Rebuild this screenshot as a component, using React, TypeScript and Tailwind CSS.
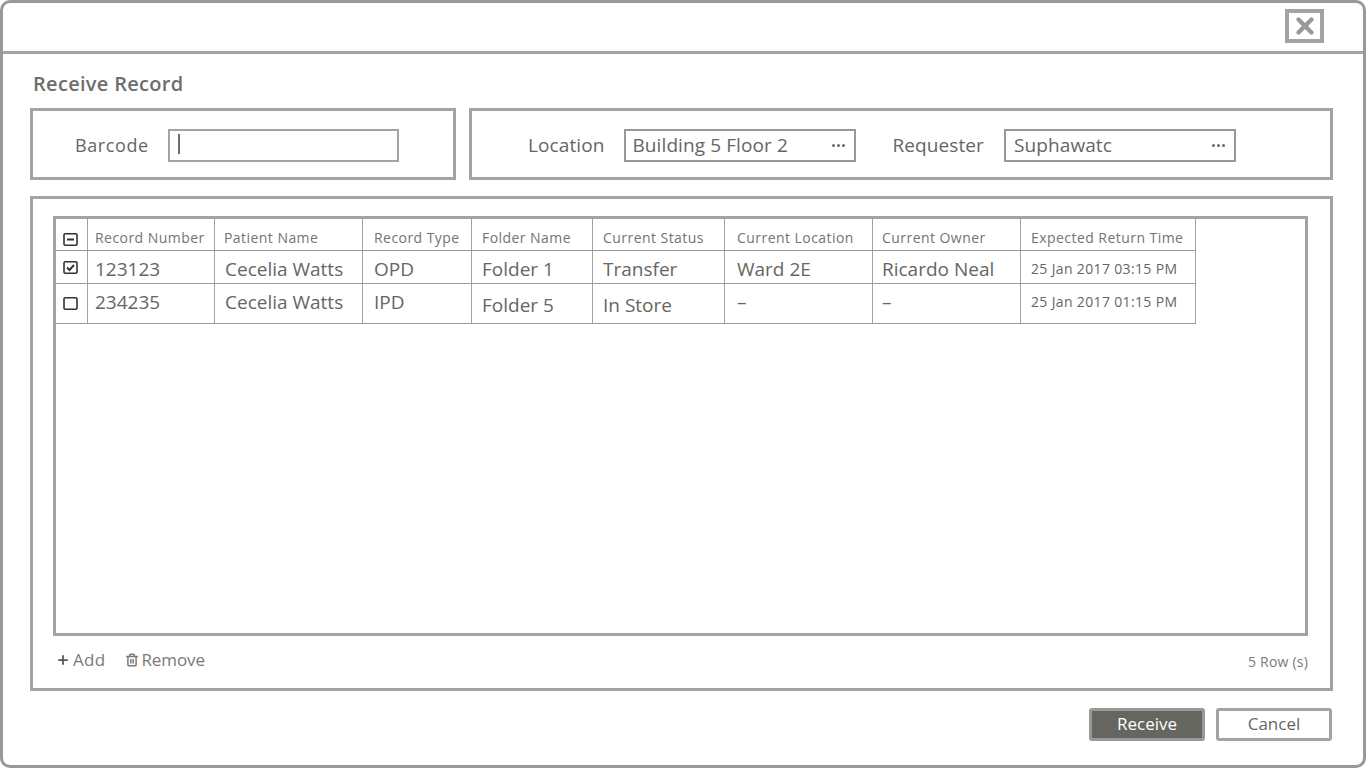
import { Plus, Trash2, X } from "lucide-react";

const columns = [
  { label: "Record Number", width: "w-[127px]", pad: "pl-[7px]", headPad: "pl-[7px]" },
  { label: "Patient Name", width: "w-[148px]", pad: "pl-[10px]", headPad: "pl-[9px]" },
  { label: "Record Type", width: "w-[109px]", pad: "pl-[11px]", headPad: "pl-[11px]" },
  { label: "Folder Name", width: "w-[121px]", pad: "pl-[10px]", headPad: "pl-[10px]" },
  { label: "Current Status", width: "w-[132px]", pad: "pl-[10px]", headPad: "pl-[10px]" },
  { label: "Current Location", width: "w-[148px]", pad: "pl-[12px]", headPad: "pl-[12px]" },
  { label: "Current Owner", width: "w-[148px]", pad: "pl-[9px]", headPad: "pl-[9px]" },
  { label: "Expected Return Time", width: "w-[175px]", pad: "pl-[10px]", headPad: "pl-[10px]" },
];

const rows = [
  { checked: true, height: "h-[33px]", cells: ["123123", "Cecelia Watts", "OPD", "Folder 1", "Transfer", "Ward 2E", "Ricardo Neal", "25 Jan 2017 03:15 PM"] },
  { checked: false, height: "h-[40px]", cells: ["234235", "Cecelia Watts", "IPD", "Folder 5", "In Store", "–", "–", "25 Jan 2017 01:15 PM"] },
];

function CheckBox({ mark }: { mark?: "minus" | "check" }) {
  return (
    <svg width="15" height="13" viewBox="0 0 15 13" fill="none" stroke="#333" strokeWidth="1.6">
      <rect x="1" y="0.8" width="13" height="11.4" rx="1.2" />
      {mark === "minus" && <path d="M4 6.5h7" strokeWidth="2" />}
      {mark === "check" && <path d="M4 6.5l2.5 2.5L11 4" strokeWidth="2" />}
    </svg>
  );
}

function Dots() {
  return (
    <span className="flex gap-[2px]">
      <span className="w-[3px] h-[3px] rounded-full bg-[#6b6b6b]" />
      <span className="w-[3px] h-[3px] rounded-full bg-[#6b6b6b]" />
      <span className="w-[3px] h-[3px] rounded-full bg-[#6b6b6b]" />
    </span>
  );
}

function PickField({ value, pad }: { value: string; pad: string }) {
  return (
    <div className={`w-[232px] h-[33px] border-2 border-[#999] flex items-center justify-between ${pad} pr-[9px] text-[19px] font-medium tracking-[0.1px]`}>
      <span>{value}</span>
      <Dots />
    </div>
  );
}

export default function App() {
  return (
    <div className="w-[1366px] h-[768px] bg-white text-[#666663] overflow-hidden" style={{ fontFamily: '"Open Sans", sans-serif' }}>
      <div className="h-full border-[3px] border-[#999] rounded-[10px] flex flex-col">
        <div className="h-[51px] shrink-0 border-b-[3px] border-[#a3a3a3] flex justify-end pt-[6px] pr-[39px]">
          <div className="w-[39px] h-[34px] border-[4px] border-[#a3a3a3] flex items-center justify-center">
            <X size={26} strokeWidth={4} className="text-[#999]" />
          </div>
        </div>

        <div className="flex-1 flex flex-col pl-[27px] pr-[30px]">
          <h1 className="pt-[15px] pl-[3px] h-[54px] text-[20px] leading-[30px] font-semibold tracking-[0.3px] text-[#6e6e6b]">Receive Record</h1>

          <div className="flex gap-[13px] h-[72px]">
            <div className="w-[426px] border-[3px] border-[#a3a3a3] flex items-center pl-[42px] pt-[3px] gap-[19px]">
              <span className="text-[18px] font-medium tracking-[0.6px]">Barcode</span>
              <div className="w-[231px] h-[33px] border-2 border-[#a3a3a3] flex items-center pl-[8px]">
                <span className="w-[2px] h-[20px] bg-[#6b6b68] -mt-[3px]" />
              </div>
            </div>
            <div className="flex-1 border-[3px] border-[#a3a3a3] flex items-center pl-[56px] pt-[3px]">
              <span className="text-[19px] font-medium mr-[20px] tracking-[0.1px]">Location</span>
              <PickField value="Building 5 Floor 2" pad="pl-[6px]" />
              <span className="text-[19px] font-medium ml-[36px] mr-[20px] tracking-[0.1px]">Requester</span>
              <PickField value="Suphawatc" pad="pl-[8px]" />
            </div>
          </div>

          <div className="mt-[16px] h-[495px] border-[3px] border-[#a3a3a3] pt-[17px] pl-[20px] pr-[22px] flex flex-col">
            <div className="h-[420px] border-[3px] border-[#a3a3a3]">
              <div className="flex w-[1140px] h-[32px] border-b border-[#999]">
                <div className="w-[32px] border-r border-[#a3a3a3] flex items-center justify-center pt-[9px] pr-[3px]">
                  <CheckBox mark="minus" />
                </div>
                {columns.map((col) => (
                  <div key={col.label} className={`${col.width} ${col.headPad} border-r border-[#a3a3a3] pt-[10px] text-[14px] leading-[18px] font-medium tracking-[0.45px] text-[#737373]`}>
                    {col.label}
                  </div>
                ))}
              </div>
              {rows.map((row) => (
                <div key={row.cells[0]} className={`flex w-[1140px] ${row.height} border-b border-[#999]`}>
                  <div className={`w-[32px] border-r border-[#a3a3a3] flex justify-center pr-[3px] ${row.checked ? "pt-[10px]" : "pt-[13px]"}`}>
                    <CheckBox mark={row.checked ? "check" : undefined} />
                  </div>
                  {row.cells.map((cell, i) => (
                    <div
                      key={i}
                      className={`${columns[i].width} ${columns[i].pad} border-r border-[#a3a3a3] ${i === 7 ? "text-[14px] leading-[26px] font-medium tracking-[0.35px]" : "text-[19px] leading-[26px] font-medium"} ${!row.checked && (i === 3 || i === 4) ? "pt-[8px]" : "pt-[5px]"}`}
                    >
                      {cell}
                    </div>
                  ))}
                </div>
              ))}
            </div>
            <div className="flex items-center justify-between flex-1 pb-[5px] text-[#7a7a7a]">
              <div className="flex items-center pl-[3px]">
                <Plus size={14} strokeWidth={3} className="text-[#555] mr-[3px]" />
                <span className="text-[17px] tracking-[0.3px] mr-[20px]">Add</span>
                <Trash2 size={14} strokeWidth={2.6} className="mr-[2px]" />
                <span className="text-[17px] tracking-[-0.1px]">Remove</span>
              </div>
              <span className="text-[14px] tracking-[0.2px] pt-[4px]">5 Row (s)</span>
            </div>
          </div>

          <div className="flex justify-end gap-[11px] mt-[17px] mr-[1px]">
            <button className="w-[116px] h-[33px] rounded-[3px] border-[3px] border-[#999] bg-[#666660] text-white text-[17px] font-medium pb-[2px]">Receive</button>
            <button className="w-[116px] h-[33px] rounded-[3px] border-[3px] border-[#a3a3a3] text-[17px] font-medium pb-[2px]">Cancel</button>
          </div>
        </div>
      </div>
    </div>
  );
}
